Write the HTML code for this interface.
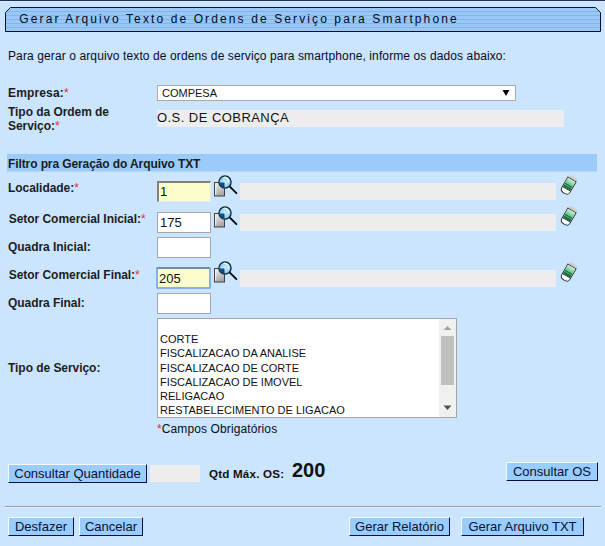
<!DOCTYPE html>
<html><head><meta charset="utf-8">
<style>
html,body{margin:0;padding:0;}
body{width:605px;height:546px;background:#CBE5FE;position:relative;overflow:hidden;font-family:"Liberation Sans",sans-serif;color:#000;}
.a{position:absolute;white-space:nowrap;}
.t{font-size:12px;letter-spacing:0.11px;color:#070b1c;}
.l{font-size:12px;font-weight:bold;letter-spacing:-0.05px;color:#1c1c22;}
.req{color:#e8283c;font-weight:normal;font-size:12px;}
.inp{background:#fff;border:1px solid #a3a6aa;box-sizing:border-box;}
.yel{background:#FDFDCB;}
.gray{background:#EDEDED;}
.v{font-size:13px;color:#111;}
.btn{background:#99CCFF;box-sizing:border-box;border-style:solid;border-width:1px;border-color:#f4faff #0a0f40 #0a0f40 #f4faff;font-size:13px;color:#0a1030;}
.btn span{position:absolute;top:1px;left:0;right:0;text-align:center;}
</style></head><body>
<div class="a" style="left:0;top:0;width:605px;height:1px;background:#203550;"></div>
<div class="a" style="left:0;top:1px;width:605px;height:1px;background:#d8ecff;"></div>
<svg class="a" style="left:5px;top:7px;" width="596" height="25" viewBox="0 0 596 25">
<defs>
<pattern id="st" width="4" height="4" patternUnits="userSpaceOnUse" y="0">
<rect width="4" height="4" fill="#99c8f6"/>
<rect y="0" width="4" height="1" fill="#84b5e8"/>
</pattern>
</defs>
<path d="M5.5 0.5 H590.5 L595.5 5.5 V24.5 H0.5 V5.5 Z" fill="url(#st)" stroke="#061028" stroke-width="1"/>
</svg>
<div class="a" style="left:19.3px;top:12px;font-size:12px;letter-spacing:2.11px;color:#000a2c;">Gerar Arquivo Texto de Ordens de Serviço para Smartphone</div>

<div class="a t" style="left:8px;top:49px;">Para gerar o arquivo texto de ordens de serviço para smartphone, informe os dados abaixo:</div>

<div class="a l" style="left:8px;top:86px;letter-spacing:0.15px;">Empresa:<span class="req">*</span></div>
<div class="a inp" style="left:157px;top:85px;width:359px;height:16px;border-color:#a9a9a9;"></div>
<div class="a" style="left:162px;top:87px;font-size:11px;color:#111;">COMPESA</div>
<svg class="a" style="left:502px;top:89px;" width="8" height="8" viewBox="0 0 8 8"><path d="M0.5 1 H7.5 L4 7 Z" fill="#000"/></svg>

<div class="a l" style="left:8px;top:105px;">Tipo da Ordem de</div>
<div class="a l" style="left:8px;top:119px;">Serviço:<span class="req">*</span></div>
<div class="a gray" style="left:157px;top:110px;width:407px;height:17px;"></div>
<div class="a" style="left:157px;top:110px;font-size:13px;letter-spacing:0.45px;color:#111;">O.S. DE COBRANÇA</div>

<div class="a" style="left:7px;top:154px;width:590px;height:17px;background:#9BCBFA;box-shadow:0 1px 0 rgba(155,203,250,0.45);"></div>
<div class="a l" style="left:8px;top:156.5px;letter-spacing:-0.1px;">Filtro pra Geração do Arquivo TXT</div>

<!-- icons defs -->
<svg width="0" height="0" style="position:absolute">
<defs>
<linearGradient id="doc" x1="0" y1="0" x2="0.3" y2="1">
<stop offset="0" stop-color="#f2f2f2"/><stop offset="1" stop-color="#a8a8a8"/>
</linearGradient>
<radialGradient id="lens" cx="0.5" cy="0.5" r="0.55">
<stop offset="0" stop-color="#d8f2fd"/><stop offset="0.6" stop-color="#9ad6f4"/><stop offset="1" stop-color="#62b4e4"/>
</radialGradient>
<linearGradient id="dq" x1="0" y1="0" x2="1" y2="1">
<stop offset="0" stop-color="#0b5a98"/><stop offset="1" stop-color="#0a3f70"/>
</linearGradient>
<linearGradient id="grn" x1="0" y1="0" x2="0" y2="1">
<stop offset="0" stop-color="#c8f0d8"/><stop offset="0.5" stop-color="#6cc890"/><stop offset="1" stop-color="#1a7a40"/>
</linearGradient>
<g id="mag">
<rect x="2.5" y="8.5" width="10" height="13.5" fill="url(#doc)" stroke="#404040" stroke-width="1"/>
<line x1="3.7" y1="9.5" x2="3.7" y2="21" stroke="#fff" stroke-width="0.9" opacity="0.9"/>
<line x1="17.6" y1="12.4" x2="24.4" y2="19.2" stroke="#000" stroke-width="1.8" stroke-linecap="round"/>
<circle cx="13" cy="8" r="6.1" fill="url(#lens)" stroke="#0c2638" stroke-width="1.3"/>
<path d="M12.5 8.5 V13.4 A5.4 5.4 0 0 1 7.6 8.5 Z" fill="url(#dq)"/>
<path d="M11.5 3.6 A4 4 0 0 1 16.6 8.4" fill="none" stroke="#fff" stroke-width="1.3" opacity="0.85"/>
</g>
<g id="era">
<path d="M-4 -11.3 Q0 -12.6 4.6 -11.3 L5.4 -8.3 H-5 Z" fill="#cfcfcf"/>
<path d="M-5 -8.3 H5 V4.5 Q5 8.3 0 8.3 Q-5 8.3 -5 4.5 Z" fill="#fff" stroke="#2a2a2a" stroke-width="1"/>
<rect x="-4.5" y="-7.8" width="9" height="10.6" fill="url(#grn)"/>
<line x1="-4.5" y1="-1.2" x2="4.5" y2="-1.2" stroke="#0e5a2a" stroke-width="0.9"/>
<line x1="-4.5" y1="1.2" x2="4.5" y2="1.2" stroke="#0e5a2a" stroke-width="0.9"/>
<line x1="-5" y1="3.1" x2="5" y2="3.1" stroke="#2a2a2a" stroke-width="0.9"/>
</g>
</defs>
</svg>

<div class="a l" style="left:8px;top:181px;">Localidade:<span class="req">*</span></div>
<div class="a yel" style="left:157px;top:181px;width:54px;height:21px;box-sizing:border-box;border-style:solid;border-width:2px 1px 1px 2px;border-color:#808080 #e4eaee #e4eaee #808080;"></div>
<div class="a v" style="left:160px;top:184px;">1</div>
<svg class="a" style="left:212px;top:174px;" width="28" height="24"><use href="#mag"/></svg>
<div class="a gray" style="left:240px;top:183px;width:316px;height:17px;"></div>
<svg class="a" style="left:556px;top:172px;" width="26" height="28"><g transform="translate(12 14.3) rotate(30) scale(0.95)"><use href="#era"/></g></svg>

<div class="a l" style="left:8.8px;top:212px;">Setor Comercial Inicial:<span class="req">*</span></div>
<div class="a inp" style="left:157px;top:212px;width:54px;height:21px;"></div>
<div class="a v" style="left:160px;top:215px;">175</div>
<svg class="a" style="left:212px;top:205px;" width="28" height="24"><use href="#mag"/></svg>
<div class="a gray" style="left:240px;top:214px;width:316px;height:17px;"></div>
<svg class="a" style="left:556px;top:203px;" width="26" height="28"><g transform="translate(12 14.3) rotate(30) scale(0.95)"><use href="#era"/></g></svg>

<div class="a l" style="left:8px;top:240px;">Quadra Inicial:</div>
<div class="a inp" style="left:157px;top:237px;width:54px;height:21px;"></div>

<div class="a l" style="left:8.8px;top:268px;">Setor Comercial Final:<span class="req">*</span></div>
<div class="a yel" style="left:156px;top:267px;width:55px;height:22px;box-sizing:border-box;border:2px solid #86b0ea;border-top-color:#7088b0;border-radius:2px;"></div>
<div class="a v" style="left:159px;top:271px;">205</div>
<svg class="a" style="left:212px;top:260px;" width="28" height="24"><use href="#mag"/></svg>
<div class="a gray" style="left:240px;top:270px;width:316px;height:17px;"></div>
<svg class="a" style="left:556px;top:259px;" width="26" height="28"><g transform="translate(12 14.3) rotate(30) scale(0.95)"><use href="#era"/></g></svg>

<div class="a l" style="left:8px;top:296px;">Quadra Final:</div>
<div class="a inp" style="left:157px;top:293px;width:54px;height:21px;"></div>

<div class="a l" style="left:8px;top:361px;">Tipo de Serviço:</div>
<div class="a inp" style="left:157px;top:318px;width:300px;height:100px;"></div>
<div class="a" style="left:439px;top:319px;width:17px;height:98px;background:#F0F0F0;"></div>
<div class="a" style="left:441px;top:336px;width:13px;height:49px;background:#C0C0C0;"></div>
<svg class="a" style="left:443px;top:325px;" width="9" height="6"><path d="M0.5 5 L4.5 1 L8.5 5 Z" fill="#a3a3a3"/></svg>
<svg class="a" style="left:443px;top:405px;" width="9" height="6"><path d="M0.5 0.5 H8.5 L4.5 5 Z" fill="#505050"/></svg>
<div class="a" style="left:160px;top:332px;font-size:11px;line-height:14.3px;color:#111;">CORTE<br>FISCALIZACAO DA ANALISE<br>FISCALIZACAO DE CORTE<br>FISCALIZACAO DE IMOVEL<br>RELIGACAO<br>RESTABELECIMENTO DE LIGACAO</div>

<div class="a t" style="left:157px;top:422px;"><span class="req">*</span>Campos Obrigatórios</div>

<div class="a btn" style="left:8px;top:464px;width:139px;height:19px;"><span>Consultar Quantidade</span></div>
<div class="a gray" style="left:150px;top:465px;width:50px;height:17px;background:#EFEDEC;"></div>
<div class="a" style="left:209px;top:467px;font-size:11.6px;font-weight:bold;letter-spacing:0.2px;color:#111;">Qtd Máx. OS:</div>
<div class="a" style="left:292px;top:459px;font-size:20px;font-weight:bold;letter-spacing:0px;color:#111;">200</div>
<div class="a btn" style="left:506px;top:462px;width:92px;height:19px;"><span>Consultar OS</span></div>

<div class="a" style="left:5px;top:506px;width:596px;height:1px;background:#9a9a9a;"></div>
<div class="a" style="left:5px;top:507px;width:596px;height:1px;background:#e6f2ff;"></div>

<div class="a btn" style="left:8px;top:517px;width:66px;height:19px;"><span>Desfazer</span></div>
<div class="a btn" style="left:79px;top:517px;width:64px;height:19px;"><span>Cancelar</span></div>
<div class="a btn" style="left:349px;top:517px;width:101px;height:19px;"><span>Gerar Relatório</span></div>
<div class="a btn" style="left:461px;top:517px;width:123px;height:19px;"><span>Gerar Arquivo TXT</span></div>
</body></html>
